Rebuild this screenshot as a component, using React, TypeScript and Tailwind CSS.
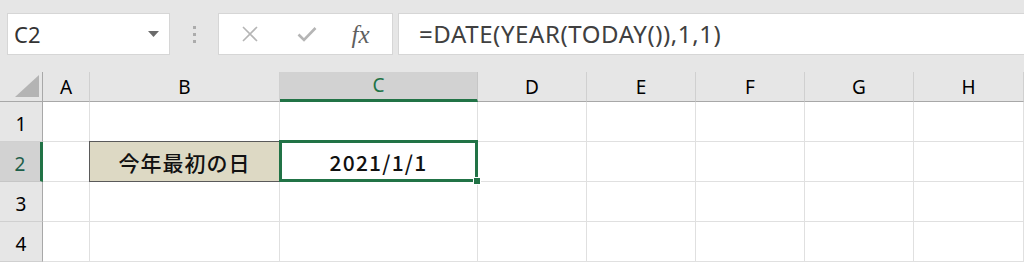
import React from 'react';

const cols = ['A', 'B', 'C', 'D', 'E', 'F', 'G', 'H'];
const rows = [1, 2, 3, 4];

const uiFont = { fontFamily: '"Noto Sans", "Noto Sans CJK JP", sans-serif' };
const cellFont = { fontFamily: '"Noto Sans CJK JP", "Noto Sans", sans-serif' };

const FormulaBar = () => (
  <div className="h-[72px] bg-[#e6e6e6] flex items-start pt-[13px] pl-[7px]">
    {/* name box */}
    <div className="w-[163px] h-[42px] bg-white border border-[#d6d6d6] flex items-center pl-[6px] pr-[10px]">
      <span className="flex-1 text-[22px] text-[#333] leading-none" style={uiFont}>C2</span>
      <svg width="11" height="6" viewBox="0 0 11 6"><path d="M0 0h11L5.5 6z" fill="#6b6b6b" /></svg>
    </div>
    {/* grip dots */}
    <div className="w-[48px] h-[42px] flex flex-col items-center justify-center gap-[4px]">
      <div className="w-[3px] h-[3px] bg-[#acacac]" />
      <div className="w-[3px] h-[3px] bg-[#acacac]" />
      <div className="w-[3px] h-[3px] bg-[#acacac]" />
    </div>
    {/* cancel / enter / fx */}
    <div className="w-[175px] h-[42px] bg-white border border-[#d6d6d6] flex items-center">
      <div className="w-[62px] flex justify-center">
        <svg width="18" height="18" viewBox="0 0 18 18"><path d="M2 2l14 14M16 2L2 16" stroke="#b5b5b5" strokeWidth="1.6" /></svg>
      </div>
      <div className="w-[52px] flex justify-center">
        <svg width="20" height="16" viewBox="0 0 20 16"><path d="M1.5 8.5l5.5 5.5L18.5 2" stroke="#b5b5b5" strokeWidth="2.6" fill="none" /></svg>
      </div>
      <div className="flex-1 flex justify-center pr-[4px]">
        <span className="text-[25px] italic text-[#5f5f5f] leading-none" style={{ fontFamily: '"Liberation Serif", serif' }}>fx</span>
      </div>
    </div>
    {/* formula input */}
    <div className="ml-[5px] flex-1 h-[42px] bg-white border-y border-l border-[#d6d6d6] flex items-center pl-[20px]">
      <span className="text-[24px] tracking-[0.6px] text-[#404040] leading-none" style={uiFont}>=DATE(YEAR(TODAY()),1,1)</span>
    </div>
  </div>
);

const ColHeader = ({ label }: { label: string }) => {
  const active = label === 'C';
  return (
    <div
      className={
        active
          ? 'bg-[#d2d2d2] border-r border-[#c6c6c6] border-b-[3px] border-b-[#217346] flex items-center justify-center text-[19px] text-[#217346]'
          : 'bg-[#e6e6e6] border-r border-[#d0d0d0] border-b border-b-[#a8a8a8] flex items-center justify-center pt-[2px] text-[19px] text-black'
      }
      style={uiFont}
    >
      {label}
    </div>
  );
};

const RowHeader = ({ n }: { n: number }) => {
  const active = n === 2;
  return (
    <div
      className={
        active
          ? 'bg-[#d2d2d2] border-r-[3px] border-r-[#217346] border-b border-[#c6c6c6] flex items-center justify-center pt-[6px] text-[19px] text-[#1e5f4a]'
          : 'bg-[#e6e6e6] border-r border-r-[#a8a8a8] border-b border-[#d0d0d0] flex items-center justify-center pt-[6px] text-[19px] text-black'
      }
      style={uiFont}
    >
      {n}
    </div>
  );
};

const Cell = ({ col, row }: { col: string; row: number }) => {
  if (col === 'B' && row === 2) {
    return (
      <div className="relative border-r border-b border-[#e0e0e0]">
        <div className="absolute -top-[1px] -left-[1px] right-[-1px] bottom-[-1px] bg-[#ddd9c4] border border-[#5a5a5a] flex items-center justify-center pt-[2px]">
          <span className="text-[21px] font-medium text-[#111] tracking-[1px]" style={cellFont}>今年最初の日</span>
        </div>
      </div>
    );
  }
  if (col === 'C' && row === 2) {
    return (
      <div className="relative border-r border-b border-[#e0e0e0] flex items-center justify-center pt-[2px]">
        <span className="text-[21px] font-medium text-[#111] tracking-[1.2px]" style={cellFont}>2021/1/1</span>
        <div className="absolute -top-[2px] -left-[1px] right-[-1px] bottom-[-1px] border-[3px] border-[#217346]" />
        <div className="absolute right-[-4px] bottom-[-4px] w-[8px] h-[8px] bg-[#217346] border border-white" />
      </div>
    );
  }
  return <div className="border-r border-b border-[#e0e0e0]" />;
};

const App = () => {
  return (
    <div className="w-[1024px] h-[262px] overflow-hidden bg-white">
      <FormulaBar />
      <div className="grid grid-cols-[43px_47px_190px_198px_109px_109px_109px_109px_110px] grid-rows-[30px_40px_40px_40px_40px]">
        {/* select-all corner */}
        <div className="bg-[#e6e6e6] border-r border-[#a8a8a8] border-b border-b-[#a8a8a8] flex items-end justify-end pr-[3px] pb-[4px]">
          <svg width="24" height="22" viewBox="0 0 24 22"><path d="M24 0V22H0z" fill="#b4b4b4" /></svg>
        </div>
        {cols.map((c) => (
          <ColHeader key={c} label={c} />
        ))}
        {rows.map((r) => (
          <React.Fragment key={r}>
            <RowHeader n={r} />
            {cols.map((c) => (
              <Cell key={c + r} col={c} row={r} />
            ))}
          </React.Fragment>
        ))}
      </div>
    </div>
  );
};

export default App;
